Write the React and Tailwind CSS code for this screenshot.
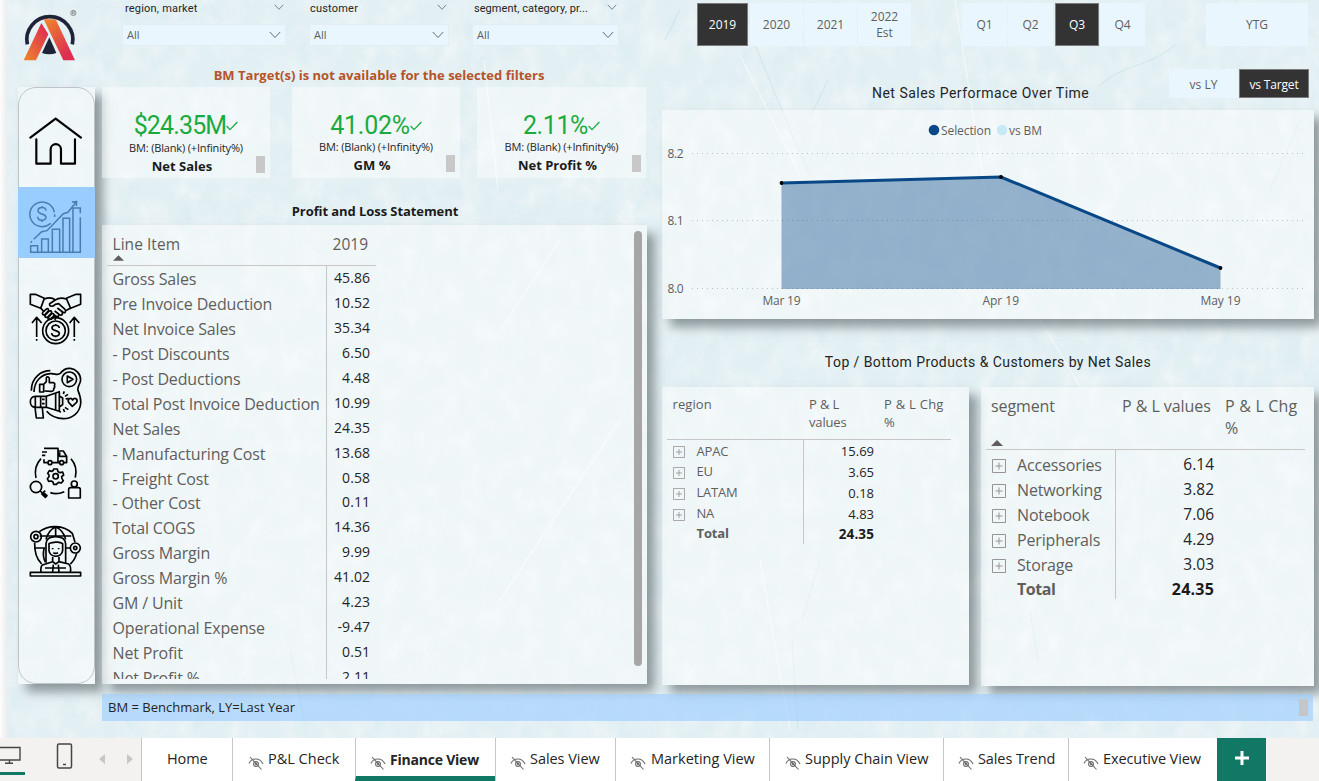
import React from "react";

const pnlRows = [
  ["Gross Sales", "45.86"],
  ["Pre Invoice Deduction", "10.52"],
  ["Net Invoice Sales", "35.34"],
  ["- Post Discounts", "6.50"],
  ["- Post Deductions", "4.48"],
  ["Total Post Invoice Deduction", "10.99"],
  ["Net Sales", "24.35"],
  ["- Manufacturing Cost", "13.68"],
  ["- Freight Cost", "0.58"],
  ["- Other Cost", "0.11"],
  ["Total COGS", "14.36"],
  ["Gross Margin", "9.99"],
  ["Gross Margin %", "41.02"],
  ["GM / Unit", "4.23"],
  ["Operational Expense", "-9.47"],
  ["Net Profit", "0.51"],
  ["Net Profit %", "2.11"],
];

const regions = [
  ["APAC", "15.69"],
  ["EU", "3.65"],
  ["LATAM", "0.18"],
  ["NA", "4.83"],
];

const segments = [
  ["Accessories", "6.14"],
  ["Networking", "3.82"],
  ["Notebook", "7.06"],
  ["Peripherals", "4.29"],
  ["Storage", "3.03"],
];

function Texture() {
  return (
    <svg className="absolute inset-0 h-full w-full" preserveAspectRatio="none" viewBox="0 0 1319 738" aria-hidden="true">
      <defs>
        <filter id="mottle" x="0" y="0" width="100%" height="100%">
          <feTurbulence type="fractalNoise" baseFrequency="0.05 0.035" numOctaves="5" seed="8" />
          <feColorMatrix values="0 0 0 0 1  0 0 0 0 1  0 0 0 0 1  1.8 0 0 0 -0.72" />
        </filter>
        <filter id="stain" x="0" y="0" width="100%" height="100%">
          <feTurbulence type="fractalNoise" baseFrequency="0.06 0.045" numOctaves="4" seed="21" />
          <feColorMatrix values="0 0 0 0 0.66  0 0 0 0 0.83  0 0 0 0 0.9  2.6 0 0 0 -1.5" />
        </filter>
      </defs>
      <rect width="1319" height="738" filter="url(#mottle)" opacity="0.45" />
      <rect width="1319" height="738" filter="url(#stain)" opacity="0.5" />
      <g fill="none" stroke="#a9d3e2" strokeWidth="1.2" opacity="0.3">
        <path d="M680 10 665 40M755 45l38 92 18 40M828 80l-18 38M1100 85c25-22 50-18 75-40M1300 120l-30 70M820 560l-18 60M1030 610l8 50M290 650l14 70M792 640l6 90" />
      </g>
      <g fill="none" stroke="#fff" strokeWidth="1.4" opacity="0.5">
        <path d="M740 55l60 120M955 0l30 190M484 60l14 130M560 240l-60 90M620 420l-120 180M1040 320l40 66M760 560l30 170" />
      </g>
    </svg>
  );
}

function Logo() {
  return (
    <svg viewBox="66 20 168 164" className="h-[54.7px] w-[56px]" aria-label="Logo">
      <defs>
        <linearGradient id="legL" x1="0" y1="1" x2="0.9" y2="0">
          <stop offset="0.1" stopColor="#ec7f2f" />
          <stop offset="0.9" stopColor="#e02f4f" />
        </linearGradient>
        <linearGradient id="legR" x1="0" y1="0" x2="0.7" y2="1">
          <stop offset="0.1" stopColor="#ec7f2f" />
          <stop offset="0.9" stopColor="#de2f50" />
        </linearGradient>
      </defs>
      <path d="M82 132A69 69 0 1 1 217 132" fill="none" stroke="#1f2337" strokeWidth="11" />
      <path d="M124 68 145 102 108 180H71Z" fill="url(#legL)" />
      <path d="M131 57H167L225 180H190Z" fill="url(#legR)" />
      <path d="M148 111 169 158Q148 166 126 158Z" fill="#1f2337" />
      <circle cx="220" cy="38" r="8" fill="none" stroke="#555" strokeWidth="1.6" />
      <path d="M217 43V33h4a2.6 2.6 0 0 1 0 5.400h-4m4 0 3 5" fill="none" stroke="#555" strokeWidth="1.6" />
    </svg>
  );
}

function HomeIcon() {
  return (
    <svg viewBox="87 347 160 150" className="h-[50px] w-[53.3px]" fill="none" stroke="#000" strokeWidth="6.500" strokeLinejoin="round" strokeLinecap="round">
      <path d="M91 412 167 355 243 412M109 417V490H152V447a15.500 15.500 0 0 1 31 0V490H225V417" />
    </svg>
  );
}

function GrowthIcon() {
  return (
    <svg viewBox="87 60 160 160" className="h-[53.3px] w-[53.3px]" fill="none" stroke="#4a7dae" strokeWidth="4.500">
      <path d="M152 130A37 37 0 1 1 163 97M164 103v8" />
      <path d="M138 92c0-14-24-12-24 0 0 12 24 8 24 20 0 12-25 12-25-2M126 78v6M126 120v6" />
      <path d="M92 217V197H113V217ZM125 217V177H145V217ZM157 217V148H179V217ZM189 217V115H209V217ZM219 217V84H241V100M241 112V217H90" />
      <path d="M92 188l4-4M101 178 125 155 141 152 190 101 204 97 227 68M216 66 230 65 229 78" />
    </svg>
  );
}

function DealIcon() {
  return (
    <svg viewBox="87 340 160 156" className="h-[52px] w-[53.3px]" fill="none" stroke="#000" strokeWidth="5" strokeLinejoin="round">
      <path d="M91 344H106L133 356 122 386 91 374ZM242 344H228L199 356 212 386 242 374Z" />
      <path d="M133 358C148 352 160 356 166 361 176 354 190 355 199 358M166 361 149 372C147 382 158 382 166 374L176 372 195 389C200 397 194 402 188 397M123 386 133 397M211 386 197 393M188 397 172 385M186 398C190 406 182 409 176 403L164 394M176 404C178 412 170 414 162 405" />
      <path d="M129 397l10-9c6-3 9 3 5 7l-9 10c-7 3-10-3-6-8ZM136 406l12-12c7-2 9 4 5 8l-10 10c-7 3-10-2-7-6ZM145 413l10-11c7-2 9 4 5 8l-8 9c-6 2-10-2-7-6ZM154 419l7-8c7-1 8 5 3 10" />
      <circle cx="167" cy="453" r="39" />
      <circle cx="167" cy="453" r="29" />
      <path d="M178 445c-1-12-22-10-22 0 0 10 22 6 22 16 0 11-22 12-23-1M167 433v5M167 468v5M110 472V413M96 430 110 413 125 430M223 472V413M209 430 223 413 238 430M110 478v5M223 478v5" />
    </svg>
  );
}

function MarketingIcon() {
  return (
    <svg viewBox="87 22 160 162" className="h-[54px] w-[53.3px]" fill="none" stroke="#000" strokeWidth="5" strokeLinejoin="round">
      <path d="M94 96C94 55 125 36 151 36M102 100C103 65 125 47 151 45c15-1 21 6 30-1 8-11 17-16 30-15 17 2 31 17 31 34 0 14-11 20-8 32 5 12 10 26 8 41-3 26-25 44-52 44-24 0-37-7-50-22" />
      <circle cx="208" cy="62" r="22" />
      <path d="M202 52v20l17-10ZM119 77H131V100H119ZM131 77 139 69 139 57c3-5 9-2 9 3v12h12c6 1 5 6 3 9 2 4 1 7-2 9 1 4-1 8-7 8l-20-1" />
      <path d="M106 113H139L178 99V158L139 146H106ZM106 113c-20 0-20 33 0 33M122 113v33M139 113v33M167 104v49M178 112l10 6v20l-10 7M105 146 109 178H130L127 147M126 122h8M126 135h8M190 106l3-8M195 113l9-6M197 121l9-2M190 151l4 9M195 146l10 7M181 157l-1 5" />
      <path d="M217 143 206 131C201 120 213 115 218 124 224 115 235 121 230 131Z" />
    </svg>
  );
}

function SupplyIcon() {
  return (
    <svg viewBox="87 262 160 162" className="h-[54px] w-[53.3px]" fill="none" stroke="#000" strokeWidth="5" strokeLinejoin="round">
      <path d="M132 269H174V312H157M143 312H132V302M126 280H141M126 290H136M174 277H190L200 293V312H192M178 312H174M179 281V293H198" />
      <circle cx="150" cy="312" r="6" />
      <circle cx="185" cy="312" r="6" />
      <path d="M123 300C108 316 103 336 108 358M213 300C227 316 231 336 226 357M151 402C162 406 180 405 193 399" />
      <path d="M161 331h11l2 8 7 3 7-2 3 9-6 5 1 6 4 6-6 7-8-2-4 3-2 3H161l-2-7-5-3-8 1-4-8 5-6v-5l-4-5 5-8 8 2 4-3Z" />
      <circle cx="167" cy="353" r="8" />
      <circle cx="108" cy="385" r="17" />
      <path d="M121 397 136 413M129 402 136 396M124 404l12 12 5-5-10-9" />
      <circle cx="223" cy="376" r="9" />
      <path d="M206 418V393q0-6 6-6H235q6 0 6 6V418Z" />
    </svg>
  );
}

function ExecutiveIcon() {
  return (
    <svg viewBox="87 497 160 158" className="h-[52.700px] w-[53.3px]" fill="none" stroke="#000" strokeWidth="5" strokeLinejoin="round">
      <path d="M91 639H242V650H91ZM118 517C147 496 190 496 217 522L225 548M104 550C103 580 111 600 125 614M230 582C226 597 219 607 211 614M167 502V532M167 502C151 510 142 524 138 540M167 502C184 510 193 523 197 540M119 530H214M106 566H136M198 566H211M136 608C129 596 129 582 132 568" />
      <circle cx="108" cy="532" r="16" />
      <circle cx="108" cy="532" r="6" />
      <circle cx="226" cy="566" r="15" />
      <circle cx="226" cy="566" r="5" />
      <path d="M138 610V553C139 537 151 532 167 532S196 538 197 553V610M147 553V573C148 596 186 597 188 573V553C180 547 175 549 167 548 159 551 153 549 147 553ZM158 593V607L167 614 177 607V593M158 607 127 617C122 622 122 630 123 638M177 607 206 614C213 621 213 630 211 638M135 626H198M160 616 158 638M175 616 177 638M158 566v4M176 566v4M160 580q7 4 14 0" />
    </svg>
  );
}

function Chevron({ small }) {
  return (
    <svg viewBox="0 0 12 8" className={small ? "h-[6.500px] w-[10px]" : "h-[8px] w-[12px]"} fill="none" stroke="#5f6b73" strokeWidth="1">
      <path d="M.8 1 6 6.500 11.200 1" />
    </svg>
  );
}

function Filter({ label, box, labelCls }) {
  return (
    <div className={box}>
      <div className="flex h-[24px] items-start justify-between pr-[1px] pt-[2px]">
        <span className={"font-[Roboto,sans-serif] text-[11px] leading-[13px] text-[#252423] " + labelCls}>{label}</span>
        <span className="pr-[1px] pt-[2px] leading-none"><Chevron small /></span>
      </div>
      <div className="flex h-[22px] items-center justify-between border border-[#e3edf3] bg-[#eaf6fe] pl-[4px] pr-[4px]">
        <span className="text-[11px] text-[#605e5c]">All</span>
        <Chevron />
      </div>
    </div>
  );
}

function Kpi({ value, name, first, box, valCls }) {
  return (
    <div className={"relative h-[91px] bg-white/45 " + box}>
      <div className="flex flex-col items-center pt-[23px]">
        <div className="flex h-[31px] items-center text-[#1aab40]">
          <span className={"font-[Roboto,sans-serif] text-[25px] leading-[31px] " + valCls}>{value}</span>
          <svg viewBox="0 0 12 10" className="h-[10px] w-[12px]" fill="none" stroke="#1aab40" strokeWidth="1.3">
            <path d="M.6 5 4 8.600 11.400 1" />
          </svg>
        </div>
        <span className={"text-[11px] leading-[14px] tracking-[-0.16px] text-[#252423] " + (first ? "mt-[0px]" : "mt-[-1px]")}>BM: (Blank) (+Infinity%)</span>
        <span className="mt-[2px] pr-[8px] text-[13px] font-bold leading-[18px] text-[#1b1b1b]">{name}</span>
      </div>
      <span className={"absolute right-[5px] h-[17px] w-[9px] bg-[#c8c8c8] " + (first ? "top-[69px]" : "top-[68px]")} />
    </div>
  );
}

function Slicer({ children, active, cls }) {
  return (
    <button className={"flex items-center justify-center text-center text-[12px] leading-[16px] " + cls + (active ? " border border-[#7a7a7a] bg-[#333] font-medium text-white" : " bg-[#eaf6fe] text-[#605e5c]")}>
      {children}
    </button>
  );
}

function Expander({ big }) {
  return (
    <svg viewBox="0 0 14 14" className={big ? "h-[14px] w-[14px]" : "h-[12px] w-[12px]"} fill="none" stroke="#979593" strokeWidth="1">
      <path d="M.5.5H13.500V13.500H.5ZM3.500 7H10.500M7 3.500V10.500" />
    </svg>
  );
}

function SalesChart() {
  return (
    <svg viewBox="662 110 652 209" className="block h-[209px] w-[652px]" fontFamily="'Open Sans', sans-serif" fontSize="12" fill="#605e5c">
      <path d="M692 153.500H1307M692 220.500H1307M692 288.500H1307" stroke="#b9bfc3" strokeWidth="1" strokeDasharray="1 4" fill="none" />
      <path d="M781.500 183 1001 177 1220.500 268V289H781.500Z" fill="#084887" fillOpacity="0.4" />
      <path d="M781.500 183 1001 177 1220.500 268" stroke="#084887" strokeWidth="3" fill="none" />
      <circle cx="781.500" cy="183" r="1.900" fill="#000" />
      <circle cx="1001" cy="177" r="1.900" fill="#000" />
      <circle cx="1220.500" cy="268" r="1.900" fill="#000" />
      <circle cx="934" cy="130" r="5.300" fill="#084887" />
      <text x="941" y="135" textLength="50">Selection</text>
      <circle cx="1002" cy="130" r="5.200" fill="#c7e8f5" />
      <text x="1009" y="135" textLength="33">vs BM</text>
      <text x="667.500" y="158" textLength="16">8.2</text>
      <text x="667.500" y="225" textLength="16">8.1</text>
      <text x="667.500" y="293" textLength="16">8.0</text>
      <text x="762.500" y="305" textLength="38">Mar 19</text>
      <text x="982.500" y="305" textLength="36.500">Apr 19</text>
      <text x="1200.500" y="305" textLength="40">May 19</text>
    </svg>
  );
}

function HiddenEye() {
  return (
    <svg viewBox="0 0 16 14" className="mt-[6px] h-[14px] w-[16px] shrink-0" fill="none" stroke="#6b6b6b" strokeWidth="1.1">
      <path d="M1 7.500C3.500 2 11.500 1 15 8M2 1 13.500 13.500" />
      <circle cx="8" cy="8" r="2.400" />
      <circle cx="8" cy="8" r="0.600" />
    </svg>
  );
}

function Tab({ label, cls, active, plain, textCls }) {
  return (
    <div className={"flex h-[43px] shrink-0 items-center border-l border-[#c8c6c4] bg-white text-[#252423] " + cls + (active ? " border-b-[5px] border-b-[#117865] pt-[5px] text-[14px] font-bold" : " text-[14.500px]")}>
      {!plain && <HiddenEye />}
      <span className={"whitespace-nowrap pb-px " + textCls}>{label}</span>
    </div>
  );
}

export default function App() {
  const shadow = "shadow-[8px_8px_10px_rgba(75,83,88,0.56)]";
  return (
    <div className="flex h-[781px] w-[1319px] flex-col overflow-hidden bg-white font-['Open_Sans','Noto_Sans',sans-serif]">
      <div className="relative h-[738px] overflow-hidden bg-[#e2eff3]">
        <Texture />
        <div className="absolute inset-y-0 left-0 w-[7px] bg-gradient-to-r from-[#fdfdfd] to-[#ececec]" />

        <div className="relative flex h-[684px] pl-[18px]">
          <div className="w-[77px] shrink-0">
            <div className="h-[87px] pl-[4px] pt-[6.500px]"><Logo /></div>
            <nav className={"h-[597px] bg-white/45 " + shadow}>
              <div className="flex h-[597px] flex-col rounded-[18px] border border-[#bfc4c7]">
                <div className="flex h-[99px] items-center justify-center pr-[2px] pt-[6px]"><HomeIcon /></div>
                <div className="mx-[-1px] flex h-[71px] items-center justify-center bg-[#99ccff] pr-[2px] pt-[8px]"><GrowthIcon /></div>
                <div className="mt-[22px] flex h-[77px] items-center justify-center pr-[2px]"><DealIcon /></div>
                <div className="flex h-[75px] items-center justify-center pr-[2px] pb-[3px]"><MarketingIcon /></div>
                <div className="flex h-[82px] items-center justify-center pr-[2px]"><SupplyIcon /></div>
                <div className="flex h-[75px] items-center justify-center pr-[2px]"><ExecutiveIcon /></div>
              </div>
            </nav>
          </div>

          <div className="ml-[7px] w-[546px] shrink-0">
            <div className="flex h-[63px] pl-[20px]">
              <Filter label="region, market" box="w-[164px]" labelCls="pl-[3px] tracking-[0.2px]" />
              <Filter label="customer" box="ml-[23px] w-[140px]" labelCls="pl-[1px] tracking-[0.2px]" />
              <Filter label="segment, category, pr..." box="ml-[23px] w-[147px]" labelCls="pl-[2px] tracking-[0.05px]" />
            </div>
            <div className="flex h-[24px] items-center justify-center pl-[8px] pt-[2px] text-[13px] font-bold tracking-[0.01px] text-[#b5532a]">
              <span>BM Target(s) is not available for the selected filters</span>
            </div>
            <div className="flex">
              <Kpi value="$24.35M" name="Net Sales" first box="w-[168px]" valCls="tracking-[-0.85px]" />
              <Kpi value="41.02%" name="GM %" box="ml-[22px] w-[168px]" valCls="tracking-[-0.3px]" />
              <Kpi value="2.11%" name="Net Profit %" box="ml-[17px] w-[169px]" valCls="tracking-[-0.4px]" />
            </div>
            <h2 className="flex h-[47px] items-end justify-center pb-[5px] text-[13px] font-bold leading-[18px] tracking-[-0.08px] text-[#1b1b1b]">Profit and Loss Statement</h2>

            <section className={"flex h-[459px] w-[545px] justify-between bg-white/45 pl-[5px] pr-[5px] pt-[6px] " + shadow}>
              <div className="w-[269px]">
                <div className="flex h-[35px] justify-between border-b border-[#c8c6c4] pl-[5.500px] pr-[8px] pt-[2px] text-[15.500px] leading-[22px] text-[#605e5c]">
                  <div>
                    <div className="tracking-[0.05px]">Line Item</div>
                    <svg viewBox="0 0 12 6" className="h-[6px] w-[11px]"><path d="M0 6 6 0 12 6Z" fill="#605e5c" /></svg>
                  </div>
                  <div>2019</div>
                </div>
                <div className="h-[413px] overflow-hidden">
                  {pnlRows.map(([k, v]) => (
                    <div key={k} className="flex h-[24.900px]">
                      <span className="flex w-[220px] items-center border-r border-[#c8c6c4] whitespace-nowrap pl-[5.500px] pt-[2px] text-[16px] tracking-[-0.16px] text-[#605e5c]">{k}</span>
                      <span className="flex w-[43px] items-center justify-end pb-px text-[14px] tracking-[0.05px] text-[#252423]">{v}</span>
                    </div>
                  ))}
                </div>
              </div>
              <div className="h-[435px] w-[8px] rounded-full bg-[#a6a6a6]" />
            </section>
          </div>

          <div className="ml-[14px] w-[652px] shrink-0">
            <div className="flex h-[69px] items-start pl-[35px] pt-[3px]">
              <Slicer active cls="h-[43px] w-[51px]">2019</Slicer>
              <Slicer cls="ml-[2px] h-[43px] w-[53px]">2020</Slicer>
              <Slicer cls="ml-[1px] h-[43px] w-[53px]">2021</Slicer>
              <Slicer cls="ml-[1px] h-[43px] w-[53px]">2022<br />Est</Slicer>
              <Slicer cls="ml-[51px] h-[43px] w-[45px]">Q1</Slicer>
              <Slicer cls="ml-[1px] h-[43px] w-[45px]">Q2</Slicer>
              <Slicer active cls="ml-[2px] h-[43px] w-[44px]">Q3</Slicer>
              <Slicer cls="ml-[1px] h-[43px] w-[45px]">Q4</Slicer>
              <Slicer cls="ml-[61px] h-[43px] w-[102px]">YTG</Slicer>
            </div>
            <div className="flex h-[41px] items-start">
              <h2 className="ml-[210px] mt-[15px] w-[297px] whitespace-nowrap font-[Roboto,sans-serif] text-[14px] leading-[18px] tracking-[0.48px] text-[#252423]">Net Sales Performace Over Time</h2>
              <Slicer cls="h-[29px] w-[69px] pt-[2px]">vs LY</Slicer>
              <Slicer active cls="ml-[1px] h-[29px] w-[70px] pt-[2px] tracking-[-0.15px]">vs Target</Slicer>
            </div>
            <section className={"h-[209px] bg-white/45 " + shadow}><SalesChart /></section>
            <h2 className="flex h-[68px] items-center justify-center pt-[18px] font-[Roboto,sans-serif] text-[14px] tracking-[0.43px] text-[#252423]">Top / Bottom Products &amp; Customers by Net Sales</h2>

            <div className="flex items-start">
              <section className={"h-[298px] w-[307px] bg-white/45 pl-[5px] text-[13px] text-[#605e5c] " + shadow}>
                <div className="flex h-[53px] w-[284px] border-b border-[#c8c6c4] pl-[5.500px] pt-[8px] leading-[18px]">
                  <span className="w-[136.500px] tracking-[0.1px]">region</span>
                  <span className="w-[75px] tracking-[-0.15px]">P &amp; L<br />values</span>
                  <span className="w-[67px] whitespace-nowrap tracking-[0.25px]">P &amp; L Chg<br />%</span>
                </div>
                {regions.map(([k, v]) => (
                  <div key={k} className="flex h-[20.800px]">
                    <span className="flex w-[137px] items-center border-r border-[#c8c6c4] pl-[6px] pt-[4px] tracking-[-0.2px]"><Expander /><span className="-mt-[1px] pb-px pl-[11.500px]">{k}</span></span>
                    <span className="flex w-[70px] items-center justify-end pt-[3px] tracking-[0px] text-[#252423]">{v}</span>
                  </div>
                ))}
                <div className="flex h-[20.800px] font-bold">
                  <span className="flex w-[137px] items-center border-r border-[#c8c6c4] pl-[29.500px] pt-[1px] tracking-[-0.15px]">Total</span>
                  <span className="flex w-[70px] items-center justify-end pt-[1px] text-[13.500px] tracking-[0.1px] text-[#1b1b1b]">24.35</span>
                </div>
              </section>

              <section className={"ml-[12px] h-[299px] w-[333px] bg-white/45 pl-[5px] text-[16px] text-[#605e5c] " + shadow}>
                <div className="flex h-[63px] w-[319px] border-b border-[#c8c6c4] pl-[5px] pt-[8px] leading-[22px]">
                  <div className="w-[131px]">
                    <div className="tracking-[-0.1px]">segment</div>
                    <svg viewBox="0 0 12 6" className="mt-[23px] h-[6px] w-[12px]"><path d="M0 6 6 0 12 6Z" fill="#605e5c" /></svg>
                  </div>
                  <span className="w-[103px] whitespace-nowrap tracking-[-0.05px]">P &amp; L values</span>
                  <span className="whitespace-nowrap tracking-[0.2px]">P &amp; L Chg<br />%</span>
                </div>
                {segments.map(([k, v]) => (
                  <div key={k} className="flex h-[24.900px]">
                    <span className="flex w-[130px] items-center border-r border-[#c8c6c4] pl-[6px] pt-[8px] tracking-[-0.15px]"><Expander big /><span className="-mt-[3px] pl-[11px]">{k}</span></span>
                    <span className="flex w-[98px] items-center justify-end pt-[5px] text-[15.500px] text-[#252423]">{v}</span>
                  </div>
                ))}
                <div className="flex h-[24.900px] font-bold">
                  <span className="flex w-[130px] items-center border-r border-[#c8c6c4] pl-[31px] pt-[4px] tracking-[-0.45px]">Total</span>
                  <span className="flex w-[98px] items-center justify-end pt-[4px] tracking-[0.2px] text-[#1b1b1b]">24.35</span>
                </div>
              </section>
            </div>
          </div>
        </div>

        <div className="relative ml-[102px] mt-[10px] flex h-[27px] w-[1211px] items-center justify-between bg-[#99ccff]/60 pl-[6px] pr-[5px] text-[13px] text-[#252423]">
          <span className="pt-px">BM = Benchmark, LY=Last Year</span>
          <span className="h-[17px] w-[9px] bg-[#c4c6c9]" />
        </div>
      </div>

      <footer className="flex h-[43px] bg-[#f3f2f1]">
        <div className="flex w-[141px] shrink-0 items-start">
          <div className="h-[37px] w-[25px] border-b-[3px] border-[#117865] pt-[8px]">
            <svg viewBox="0 0 21 18" className="h-[18px] w-[21px]" fill="none" stroke="#484644" strokeWidth="1.400">
              <path d="M0 1.500H20V14H0M9.500 14v3M5 17.300H13" />
            </svg>
          </div>
          <svg viewBox="0 0 16 26" className="ml-[31px] mt-[5px] h-[26px] w-[17px]" fill="none" stroke="#484644" strokeWidth="1.500">
            <rect x="1" y="1" width="14" height="24" rx="1.500" />
            <path d="M6.500 21.500h3" />
          </svg>
          <svg viewBox="0 0 34 12" className="ml-[26px] mt-[14.500px] h-[12px] w-[34px]" fill="#c8c6c4">
            <path d="M6 1V11L0 6ZM28 1V11L34 6Z" />
          </svg>
        </div>
        <Tab label="Home" plain cls="w-[91px] pl-[25px]" textCls="tracking-[-0.1px]" />
        <Tab label="P&L Check" cls="w-[123px] pl-[15px]" textCls="pl-[4px]" />
        <Tab label="Finance View" active cls="w-[140px] pl-[14px]" textCls="pl-[4px] tracking-[-0.22px]" />
        <Tab label="Sales View" cls="w-[120px] pl-[14px]" textCls="pl-[4px] tracking-[-0.05px]" />
        <Tab label="Marketing View" cls="w-[154px] pl-[14px]" textCls="pl-[5px]" />
        <Tab label="Supply Chain View" cls="w-[174px] pl-[15px]" textCls="pl-[4px]" />
        <Tab label="Sales Trend" cls="w-[125px] pl-[14px]" textCls="pl-[4px] tracking-[-0.1px]" />
        <Tab label="Executive View" cls="w-[149px] pl-[14px]" textCls="pl-[4px] tracking-[-0.1px]" />
        <button className="flex w-[49px] shrink-0 items-center justify-center bg-[#117865]">
          <svg viewBox="0 0 14 14" className="mb-[4px] h-[14px] w-[14px]" stroke="#fff" strokeWidth="3"><path d="M7 0V14M0 7H14" /></svg>
        </button>
      </footer>
    </div>
  );
}
